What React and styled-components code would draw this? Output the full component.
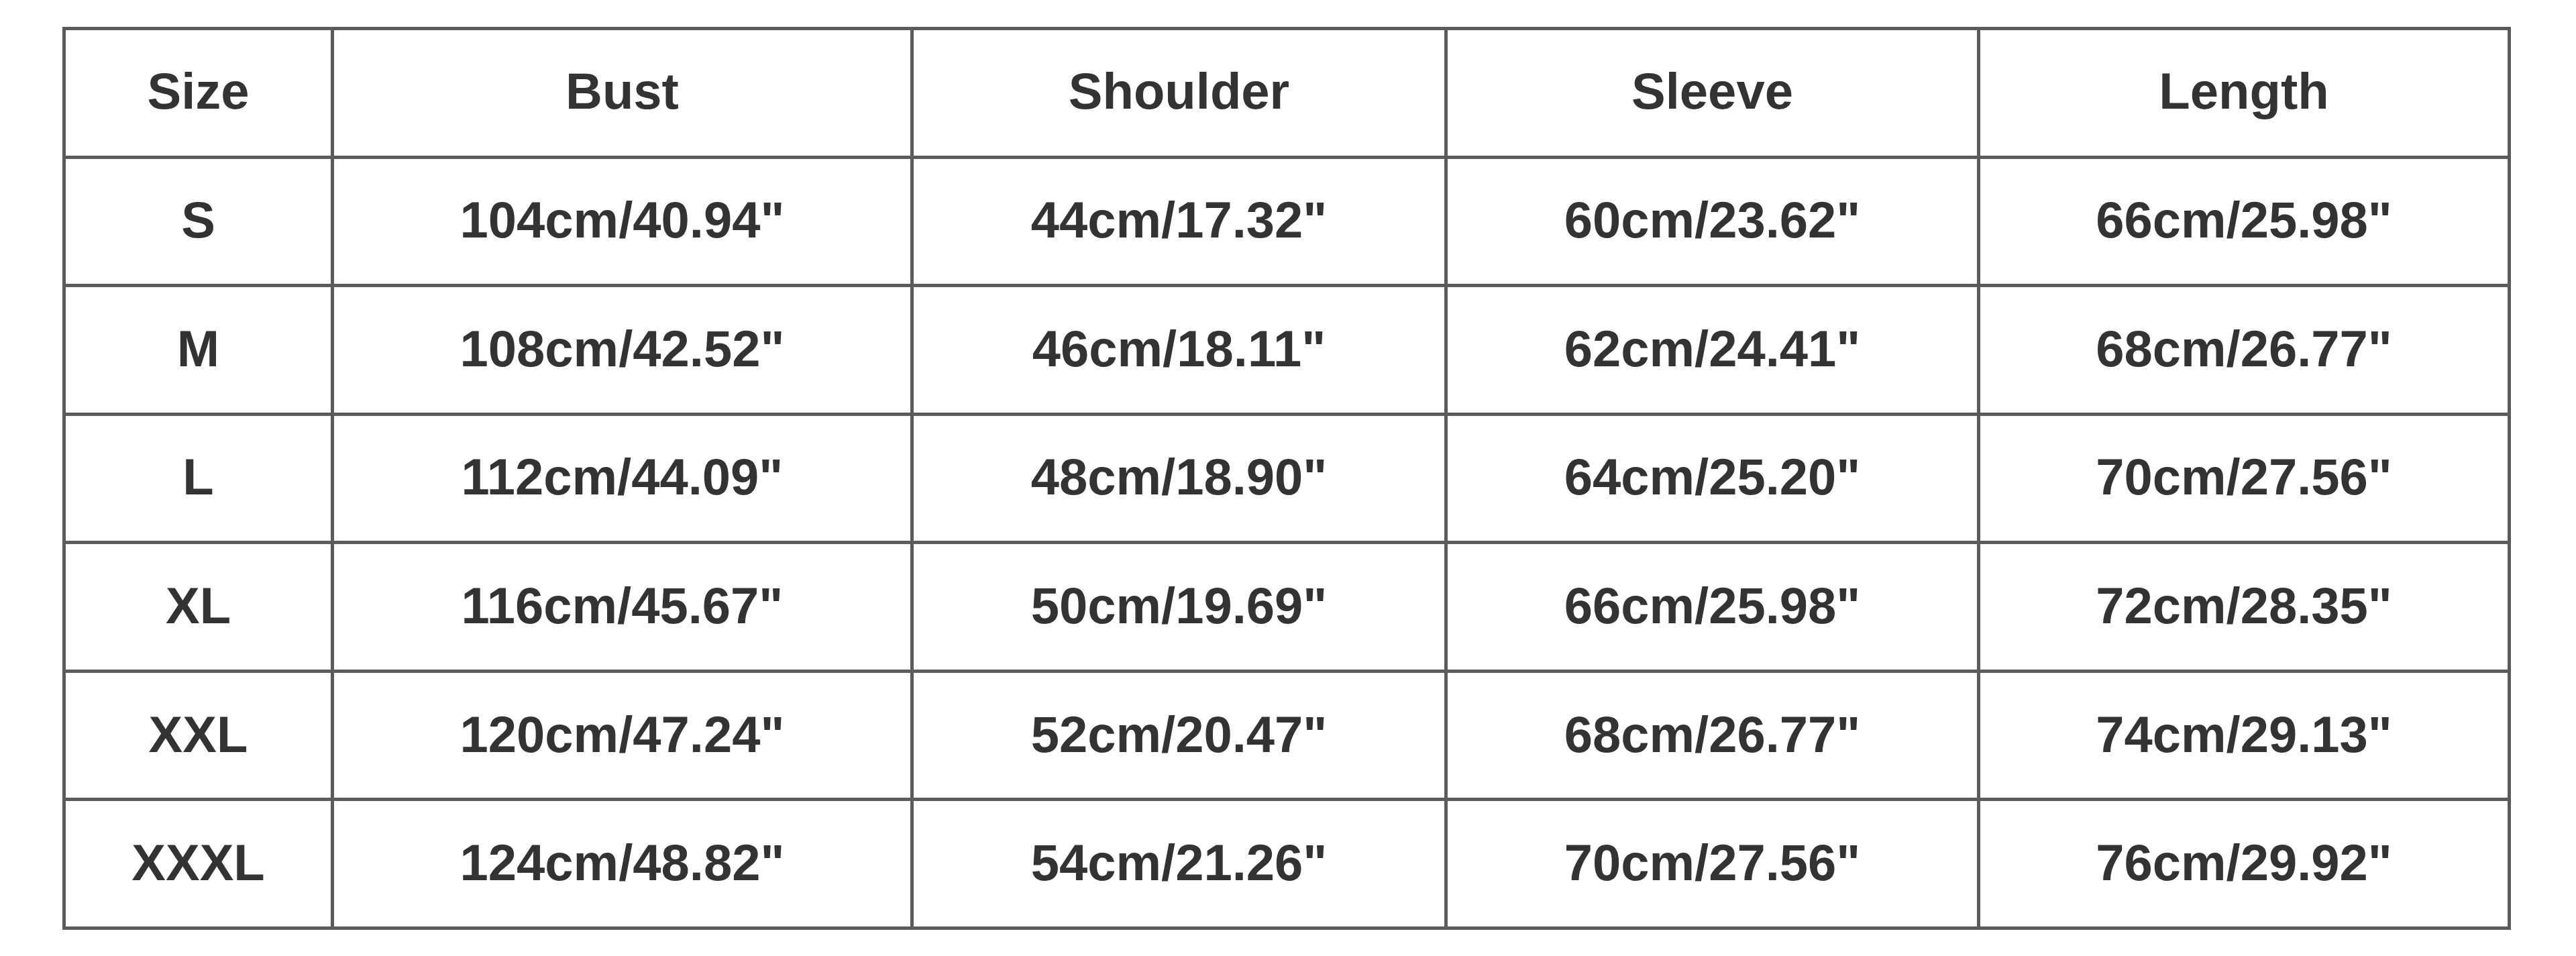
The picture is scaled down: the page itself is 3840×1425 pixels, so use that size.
import React from "react";
import styled, { createGlobalStyle } from "styled-components";

const Global = createGlobalStyle`
  html, body { margin: 0; padding: 0; background: #ffffff; }
  body { font-family: "Liberation Sans", Arial, sans-serif; }
`;

const Page = styled.div`
  width: 3840px;
  height: 1425px;
  box-sizing: border-box;
  padding: 40px 0 0 93px;
  background: #ffffff;
`;

const Table = styled.div`
  display: grid;
  grid-template-columns: 395px 859px 791px 789px 786px;
  grid-template-rows: repeat(7, 1fr);
  gap: 5px;
  padding: 5px;
  width: 3650px;
  height: 1346px;
  box-sizing: border-box;
  background: #5b5b5b;
`;

const Cell = styled.div`
  background: #ffffff;
  display: flex;
  align-items: center;
  justify-content: center;
  font-family: "Liberation Sans", Arial, sans-serif;
  font-weight: 700;
  font-size: 76px;
  color: #333333;
  padding-bottom: ${(p) => (p.$head ? "6px" : "4px")};
  box-sizing: border-box;
`;

const headers = ["Size", "Bust", "Shoulder", "Sleeve", "Length"];
const rows = [
  ["S", '104cm/40.94"', '44cm/17.32"', '60cm/23.62"', '66cm/25.98"'],
  ["M", '108cm/42.52"', '46cm/18.11"', '62cm/24.41"', '68cm/26.77"'],
  ["L", '112cm/44.09"', '48cm/18.90"', '64cm/25.20"', '70cm/27.56"'],
  ["XL", '116cm/45.67"', '50cm/19.69"', '66cm/25.98"', '72cm/28.35"'],
  ["XXL", '120cm/47.24"', '52cm/20.47"', '68cm/26.77"', '74cm/29.13"'],
  ["XXXL", '124cm/48.82"', '54cm/21.26"', '70cm/27.56"', '76cm/29.92"'],
];

export default function App() {
  return (
    <>
      <Global />
      <Page>
        <Table>
          {headers.map((h) => (
            <Cell key={h} $head>
              {h}
            </Cell>
          ))}
          {rows.map((r) =>
            r.map((v, i) => <Cell key={r[0] + i}>{v}</Cell>)
          )}
        </Table>
      </Page>
    </>
  );
}
